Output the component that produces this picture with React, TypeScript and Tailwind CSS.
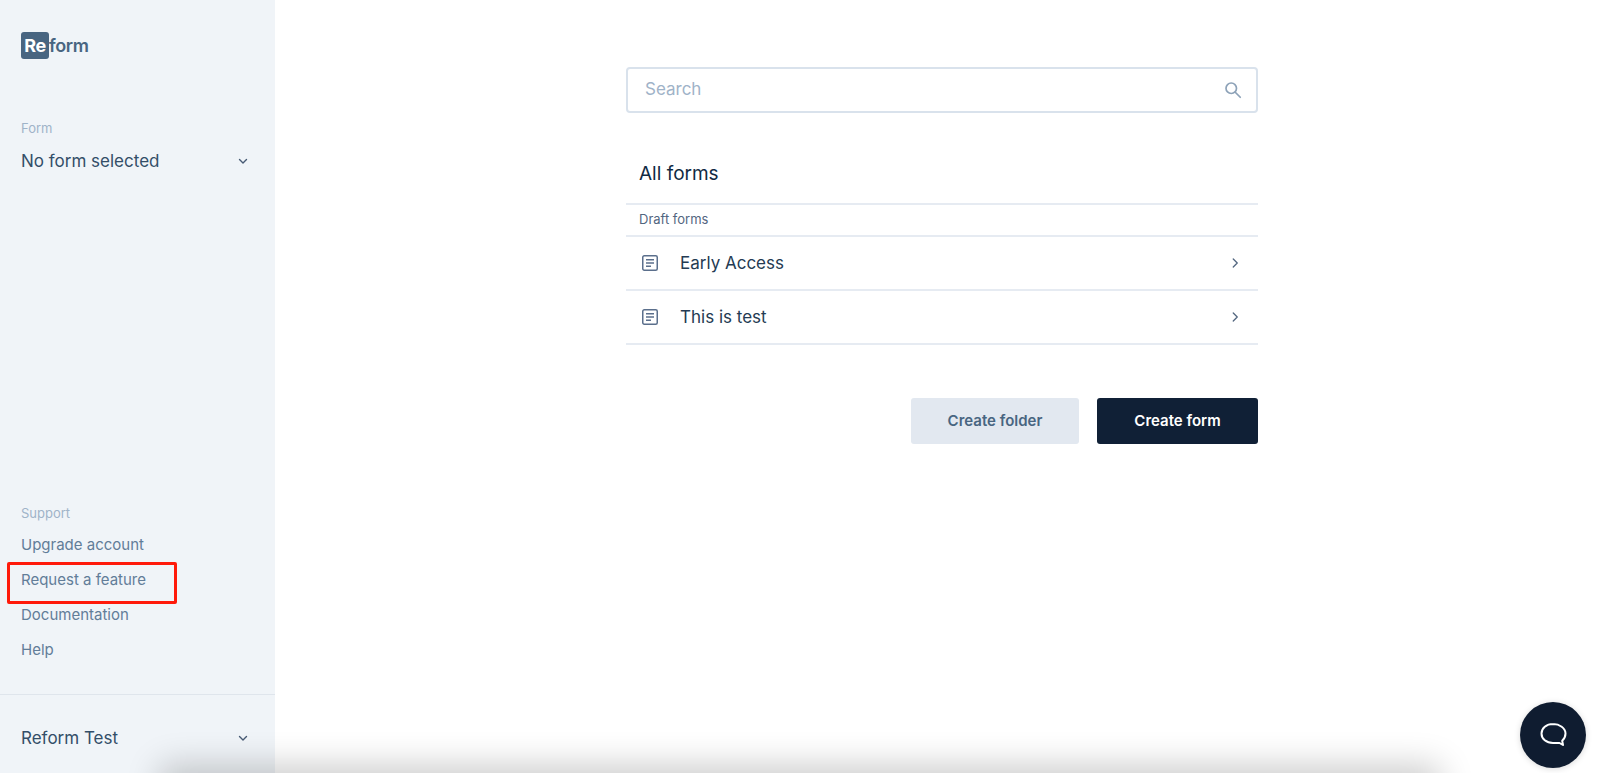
import React from "react";

function Chevron() {
  return (
    <svg width="12" height="12" viewBox="0 0 12 12" fill="none" stroke="#475a74" strokeWidth="1.4" strokeLinecap="round" strokeLinejoin="round">
      <path d="M2.5 4.5 6 8l3.5-3.5" />
    </svg>
  );
}

function DocIcon() {
  return (
    <svg width="18" height="18" viewBox="0 0 18 18" fill="none" stroke="#5b6f8c" strokeWidth="1.5">
      <rect x="1.75" y="1.75" width="14.5" height="14.5" rx="1.5" />
      <path d="M5 5.75h8M5 9h8M5 12.25h5" />
    </svg>
  );
}

function Row({ name }: { name: string }) {
  return (
    <div className="flex h-[54px] items-center border-b-2 border-[#e6ebf2] pl-[15px] pr-[17px]">
      <DocIcon />
      <span className="ml-[21px] flex-1 text-[17px] leading-6 text-[#243b53]">{name}</span>
      <svg width="12" height="12" viewBox="0 0 12 12" fill="none" stroke="#52667f" strokeWidth="1.3" strokeLinecap="round" strokeLinejoin="round">
        <path d="M4.25 2 8.25 6l-4 4" />
      </svg>
    </div>
  );
}

export default function App() {
  return (
    <div className="relative flex h-[773px] w-[1600px] overflow-hidden bg-white font-['Inter',sans-serif]">
      <aside className="flex w-[275px] shrink-0 flex-col bg-[#f0f4f8]">
        <div className="flex h-[92px] items-start pl-[21px] pt-8">
          <span className="flex h-[27px] w-[28px] items-center justify-center rounded-[3px] bg-[#486581] text-[18px] font-bold tracking-[-0.5px] text-white">Re</span>
          <span className="text-[18px] font-semibold leading-[27px] tracking-[-0.4px] text-[#486581]">form</span>
        </div>
        <div className="px-[21px]">
          <div className="mt-[27px] text-[13px] leading-[18px] text-[#9fb3c8]">Form</div>
          <div className="mt-[12px] flex h-6 items-center justify-between pr-[5px]">
            <span className="text-[17px] leading-6 text-[#334e68]">No form selected</span>
            <Chevron />
          </div>
        </div>
        <div className="mt-auto px-[21px]">
          <div className="text-[13px] leading-[18px] text-[#9fb3c8]">Support</div>
          <nav className="mt-[6px] flex flex-col text-[15px] text-[#627d98]">
            <a className="flex h-[35px] items-center">Upgrade account</a>
            <a className="relative flex h-[35px] items-center">
              Request a feature
              <span className="absolute -top-[1px] left-[-14px] h-[42px] w-[170px] rounded-[2px] border-[3px] border-[#ff1a0a]" />
            </a>
            <a className="flex h-[35px] items-center">Documentation</a>
            <a className="flex h-[35px] items-center">Help</a>
          </nav>
        </div>
        <div className="mt-[26px] h-[79px] border-t border-[#dfe5ec] px-[21px]">
          <div className="mt-[31px] flex h-6 items-center justify-between pr-[5px]">
            <span className="text-[17px] leading-6 text-[#334e68]">Reform Test</span>
            <Chevron />
          </div>
        </div>
      </aside>

      <main className="flex-1 pl-[351px] pt-[67px]">
        <div className="w-[632px]">
          <div className="flex h-[46px] items-center justify-between rounded-[4px] border-2 border-[#d9e2ec] pl-[17px] pr-[13px]">
            <span className="text-[17px] text-[#9fb3c8]">Search</span>
            <svg width="20" height="20" viewBox="0 0 20 20" fill="none" stroke="#8da2b8" strokeWidth="1.7" strokeLinecap="round">
              <circle cx="8.25" cy="8.25" r="5.25" />
              <path d="m12.25 12.25 5 5" />
            </svg>
          </div>
          <div className="mt-[47px] flex h-[45px] items-start border-b-2 border-[#e6ebf2] pl-[13px]">
            <span className="text-[19px] leading-[28px] text-[#102a43]">All forms</span>
          </div>
          <div className="flex h-[32px] items-center border-b-2 border-[#e6ebf2] pl-[13px] text-[13px] text-[#52667f]">Draft forms</div>
          <Row name="Early Access" />
          <Row name="This is test" />
          <div className="mt-[53px] flex justify-end gap-[18px]">
            <button className="h-[46px] w-[168px] rounded-[3px] bg-[#e2e8f0] text-[15px] font-semibold text-[#486581]">Create folder</button>
            <button className="h-[46px] w-[161px] rounded-[3px] bg-[#102036] text-[15px] font-semibold text-white">Create form</button>
          </div>
        </div>
      </main>

      <div className="absolute left-[170px] right-[170px] top-[775px] h-10 shadow-[0_0_34px_10px_rgba(0,0,0,0.2)]" />

      <div className="absolute left-[1520px] top-[702px] flex h-[66px] w-[66px] items-center justify-center rounded-full bg-[#0f1c30] shadow-[0_1px_6px_rgba(0,0,0,0.15)]">
        <svg width="30" height="30" viewBox="0 0 30 30" fill="none" stroke="#fff" strokeWidth="2" strokeLinejoin="round">
          <path d="M15 4C8.4 4 3.5 8 3.5 13.5S8.4 23 15 23h6.5l3.5 2-.8-4.2c1.9-1.8 3.3-4.3 3.3-7.3C27.5 8 21.6 4 15 4Z" />
        </svg>
      </div>
    </div>
  );
}
